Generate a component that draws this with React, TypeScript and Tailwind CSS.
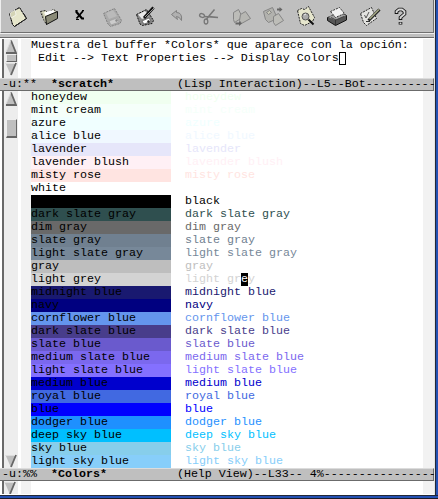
import React from "react";

const mono = "font-['Liberation_Mono','DejaVu_Sans_Mono',monospace]";

const colors: [string, string][] = [
  ["honeydew", "#f0fff0"],
  ["mint cream", "#f5fffa"],
  ["azure", "#f0ffff"],
  ["alice blue", "#f0f8ff"],
  ["lavender", "#e6e6fa"],
  ["lavender blush", "#fff0f5"],
  ["misty rose", "#ffe4e1"],
  ["white", "#ffffff"],
  ["black", "#000000"],
  ["dark slate gray", "#2f4f4f"],
  ["dim gray", "#696969"],
  ["slate gray", "#708090"],
  ["light slate gray", "#778899"],
  ["gray", "#bebebe"],
  ["light grey", "#d3d3d3"],
  ["midnight blue", "#191970"],
  ["navy", "#000080"],
  ["cornflower blue", "#6495ed"],
  ["dark slate blue", "#483d8b"],
  ["slate blue", "#6a5acd"],
  ["medium slate blue", "#7b68ee"],
  ["light slate blue", "#8470ff"],
  ["medium blue", "#0000cd"],
  ["royal blue", "#4169e1"],
  ["blue", "#0000ff"],
  ["dodger blue", "#1e90ff"],
  ["deep sky blue", "#00bfff"],
  ["sky blue", "#87ceeb"],
  ["light sky blue", "#87cefa"],
];

/* Toolbar icons share one horizontal coordinate system; x is where each slot starts. */
const icons: { x: number; w: number; art: React.ReactNode }[] = [
  {
    x: 2,
    w: 31,
    art: (
      <g>
        <path d="M9.5 13.5 L19.5 7.5 L26.5 18.5 L14.5 26.5 L12.5 24.5 Z" fill="#e6e6cb" stroke="#777" />
        <path d="M9.5 13.5 L19.5 7.5 L26.5 18.5 L14.5 26.5 L12.5 24.5 Z" fill="none" stroke="#000" strokeDasharray="2 1" />
        <path d="M10 13 L15 10 L16 15 L11 18 Z" fill="#d3d3b5" stroke="#fff" strokeWidth=".6" />
        <path d="M14.5 26.5 L26.5 18.5 L24 14" stroke="#222" fill="none" />
      </g>
    ),
  },
  {
    x: 33,
    w: 32,
    art: (
      <g>
        <path d="M40.5 11.5 L45.5 10.5 L47.5 12.5 L53.5 9.5 L56.5 11.5 L46.5 24.5 L43.5 19.5 Z" fill="#d8d8bd" stroke="#222" strokeDasharray="2 1" />
        <path d="M44 12.500 L53 10 L55 12 L46 16 Z" fill="#fff" />
        <path d="M45.500 16.500 L57.500 11.500 L57.500 18.500 L46.500 24.500 Z" fill="#8b8b78" stroke="#111" />
        <path d="M42 13 L45 22" stroke="#99998a" />
      </g>
    ),
  },
  {
    x: 65,
    w: 30,
    art: (
      <g fill="none" stroke="#000">
        <path d="M76.500 10 V12 L82 18.500 H84" strokeWidth="2.200" />
        <path d="M83 11 L76.500 18.500" strokeWidth="1.800" />
        <path d="M82 10.500 H84 M76 19.500 H79" />
      </g>
    ),
  },
  {
    x: 95,
    w: 34,
    art: (
      <g>
        <path d="M103.500 13.500 L114.500 8.500 L121.500 20.500 L120 23.500 L110.500 26.500 L108 24 Z" fill="#aaa" stroke="#808080" strokeDasharray="2 1" />
        <path d="M106 13 L113 10 L117 16 L109 19 Z" fill="#bababa" />
        <path d="M109 21 L117 18 L119 22 L111 25 Z" fill="#ccc" stroke="#999" strokeWidth=".6" />
        <path d="M115 20 l2 -1 l1 2 l-2 1 Z" fill="#888" />
      </g>
    ),
  },
  {
    x: 129,
    w: 34,
    art: (
      <g>
        <path d="M136.500 14.500 L146.500 9.500 L153.500 20.500 L152 23.500 L142.500 25.500 L140 24 Z" fill="#888" stroke="#111" strokeDasharray="2 1" />
        <path d="M138 14.500 L145 11 L149 16 L142 19 Z" fill="#e8e8e8" />
        <path d="M142 21 L149 18 L151 21.500 L144 24 Z" fill="#fff" stroke="#444" strokeWidth=".6" />
        <path d="M147 21 l2 -1 l1 2 l-2 1 Z" fill="#222" />
        <path d="M144 18 L153.500 7.500" stroke="#111" strokeWidth="3" />
        <path d="M145 17 L154 8" stroke="#999" />
      </g>
    ),
  },
  {
    x: 163,
    w: 30,
    art: (
      <g>
        <path d="M171.500 14.500 L176.500 10.500 L176.500 12.500 Q182.500 12.500 181.500 20.500 Q179.500 16.500 176.500 16.500 L177.500 19.500 Z" fill="#b0b0b0" stroke="#808080" />
      </g>
    ),
  },
  {
    x: 193,
    w: 32,
    art: (
      <g fill="none" stroke="#777">
        <ellipse cx="202" cy="15.500" rx="2.500" ry="1.800" transform="rotate(20 202 15.500)" strokeWidth="1.300" />
        <ellipse cx="206" cy="21.500" rx="1.800" ry="2.500" strokeWidth="1.300" />
        <path d="M204 16.500 L218 17.500 L209 16.500" strokeWidth="1.300" />
        <path d="M206.500 19 L214.500 9.500" strokeWidth="1.500" />
      </g>
    ),
  },
  {
    x: 225,
    w: 31,
    art: (
      <g stroke="#858585">
        <path d="M233.500 12.500 L238.500 9.500 L242.500 17.500 L234.500 22.500 L233.500 19.500 Z" fill="#bcbcb8" />
        <path d="M240.500 14.500 L245.500 11.500 L250.500 18.500 L241.500 23.500 L239.500 20.500 Z" fill="#b7b7b3" />
        <path d="M235.500 23.500 H240" stroke="#666" strokeWidth="2" />
        <path d="M239 21 L242 23.500 L239 26 Z" fill="#666" stroke="none" />
      </g>
    ),
  },
  {
    x: 256,
    w: 34,
    art: (
      <g stroke="#858585">
        <path d="M263.500 11.500 L272.500 7.500 L277.500 18.500 L268.500 22.500 L265.500 19.500 Z" fill="#b2b2ae" />
        <path d="M266.500 12.500 l3 -2 l2 2 l-3 2 Z" fill="#c9c9b9" />
        <path d="M273.500 16.500 L278.500 13.500 L283.500 20.500 L275.500 25.500 L273.500 22.500 Z" fill="#bdbdb8" />
        <path d="M277 9.500 H280" stroke="#666" strokeWidth="2" />
        <path d="M279.500 7 L282.500 9.500 L279.500 12 Z" fill="#666" stroke="none" />
      </g>
    ),
  },
  {
    x: 290,
    w: 31,
    art: (
      <g>
        <path d="M297.500 10.500 L301.500 8.500 L304.500 9.500 L308.500 6.500 L314.500 17.500 L312.500 21.500 L304.500 25.500 L300.500 23.500 Z" fill="#e6e6cd" stroke="#222" strokeDasharray="2 1" />
        <circle cx="305.500" cy="16.500" r="3.500" fill="#aaa" stroke="#555" />
        <path d="M304 15 l2 -1" stroke="#eee" />
        <path d="M308.500 19.500 L313.500 24.500" stroke="#111" strokeWidth="2" />
      </g>
    ),
  },
  {
    x: 321,
    w: 32,
    art: (
      <g>
        <path d="M327.500 17.500 L341 12.500 L346.500 15.500 V20 L335.500 25.500 L327.500 20.500 Z" fill="#555" stroke="#111" />
        <path d="M328 17 L341 12.500 L346 15.500 L335 20 Z" fill="#a0a0a0" />
        <path d="M330.500 11.500 L339.500 7.500 L344.500 13.500 L335.500 17.500 Z" fill="#f1f1f1" stroke="#333" strokeDasharray="2 1" />
        <path d="M331 17.500 L336 20 L344 16.500" stroke="#444" fill="none" />
        <path d="M335.500 20 V25" stroke="#333" />
      </g>
    ),
  },
  {
    x: 353,
    w: 33,
    art: (
      <g>
        <path d="M360.500 13.500 L371.500 7.500 L376.500 18.500 L366.500 25.500 L363.500 22.500 Z" fill="#e3e3e0" stroke="#222" strokeDasharray="2 1" />
        <path d="M364.500 15 L366 18 L369 12" stroke="#555" fill="none" />
        <path d="M368.500 20.500 L379.500 9.500" stroke="#222" strokeWidth="3" />
        <path d="M369.500 19 L379 9.500" stroke="#a7aa86" strokeWidth="1.500" />
        <path d="M366 21.500 H370" stroke="#333" />
      </g>
    ),
  },
  {
    x: 386,
    w: 32,
    art: (
      <g fill="none">
        <path d="M396.500 14 V11.500 L399 9.500 H402 L404.500 11.500 V14 L400.500 17.500 V20 M400.500 22 V24.500" stroke="#111" strokeWidth="3.600" />
        <path d="M396.500 13 V11.500 L399 9.500 H402 L404.500 11.500 V14 L400.500 17.500 V19 M400.500 22.500 V24" stroke="#d6d6d6" strokeWidth="1.800" />
      </g>
    ),
  },
];

function Arrow({ down = false }: { down?: boolean }) {
  return (
    <svg width="12" height="14" viewBox="0 0 12 14" className="block shrink-0">
      {down ? (
        <g>
          <path d="M0.500 1 H11.500 L6 13.500 Z" fill="#bfbfbf" />
          <path d="M11 1 L6 13" stroke="#666" strokeWidth="1.800" />
          <path d="M1 1.500 H10" stroke="#ddd" />
        </g>
      ) : (
        <g>
          <path d="M6 0 L11.500 13.500 H0.500 Z" fill="#bfbfbf" />
          <path d="M6 0.500 L11 13 H1" fill="none" stroke="#666" strokeWidth="1.800" />
          <path d="M5.500 1 L1 12" stroke="#ddd" />
        </g>
      )}
    </svg>
  );
}

function ModeLine({ flags, name, rest }: { flags: string; name: string; rest: string }) {
  return (
    <div className="h-[13px] shrink-0 whitespace-pre border-t border-b border-t-[#dcdcdc] border-b-[#6b6b6b] border-r border-r-[#6b6b6b] bg-[#bfbfbf] pl-[2px] leading-[11px]">
      {flags}
      <b>{name}</b>
      {rest}
    </div>
  );
}

function Pane({ bar, children }: { bar: React.ReactNode; children: React.ReactNode }) {
  return (
    <div className="flex h-full w-full">
      <div className="ml-[2px] flex w-4 shrink-0 flex-col border-l-2 border-[#696969] bg-[#ededed]">{bar}</div>
      <div className="ml-[3px] w-[10px] shrink-0 bg-[#f2f2f2]" />
      <div className="min-w-0 flex-1 whitespace-pre leading-[13px]">{children}</div>
      <div className="w-[11px] shrink-0 bg-[#f2f2f2]" />
    </div>
  );
}

export default function App() {
  return (
    <div className={`flex h-[499px] w-[438px] flex-col overflow-hidden bg-white text-[11.667px] text-black ${mono}`}>
      <div className="flex h-[495px] w-full">
        <div className="flex w-[434px] shrink-0 flex-col">
          <div className="flex h-[33px] shrink-0 border-b border-l border-r border-b-[#707070] border-l-[#eeeeee] border-r-[#707070] bg-[#bfbfbf] pl-px">
            {icons.map((i) => (
              <svg key={i.x} width={i.w} height="32" viewBox={`${i.x} 0 ${i.w} 32`} className="block shrink-0">
                {i.art}
              </svg>
            ))}
          </div>
          <div className="h-[5px] shrink-0 border-t border-b border-t-[#eeeeee] border-b-[#6b6b6b] bg-[#bfbfbf]" />
          <div className="h-10 shrink-0 pt-px">
            <Pane
              bar={
                <div className="flex flex-col items-center pt-px">
                  <Arrow />
                  <div className="h-[8px] w-[11px] border border-b-[#666] border-l-[#eee] border-r-[#666] border-t-[#eee] bg-[#bfbfbf]" />
                  <Arrow down />
                </div>
              }
            >
              <div>Muestra del buffer *Colors* que aparece con la opción:</div>
              <div className="flex">
                {" Edit --> Text Properties --> Display Colors"}
                <span className="h-[13px] w-[7px] border border-black" />
              </div>
            </Pane>
          </div>
          <ModeLine flags="-u:**  " name="*scratch*" rest="         (Lisp Interaction)--L5--Bot----------" />
          <div className="h-[377px] shrink-0">
            <Pane
              bar={
                <div className="flex h-full flex-col items-center pt-px">
                  <Arrow />
                  <div className="mt-[13px] h-[19px] w-[11px] border border-b-2 border-b-[#666] border-l-[#eee] border-r-[#666] border-t-[#eee] bg-[#bfbfbf]" />
                  <div className="flex-1" />
                  <Arrow down />
                </div>
              }
            >
              {colors.map(([name, hex]) => (
                <div key={name} className="flex h-[13px]">
                  <span className="w-[140px]" style={{ backgroundColor: hex }}>
                    {name}
                  </span>
                  <span className="ml-[14px]" style={{ color: hex }}>
                    {name === "light grey" ? (
                      <>
                        light gr<span className="inline-block h-[13px] bg-black align-top text-white">e</span>y
                      </>
                    ) : (
                      name
                    )}
                  </span>
                </div>
              ))}
            </Pane>
          </div>
          <ModeLine flags="-u:%%  " name="*Colors*" rest="          (Help View)--L33-- 4%----------------" />
          <div className="h-[13px] shrink-0 overflow-hidden">
            <Pane bar={<Arrow down />}>{""}</Pane>
          </div>
          <div className="flex-1" />
        </div>
        <div className="w-px shrink-0 bg-[#e4e4e4]" />
        <div className="w-px shrink-0 bg-[#222838]" />
        <div className="w-[2px] shrink-0 bg-[#2451b3]" />
      </div>
      <div className="h-px bg-[#222838]" />
      <div className="h-[2px] bg-[#2451b3]" />
      <div className="h-px bg-[#1b1b28]" />
    </div>
  );
}
